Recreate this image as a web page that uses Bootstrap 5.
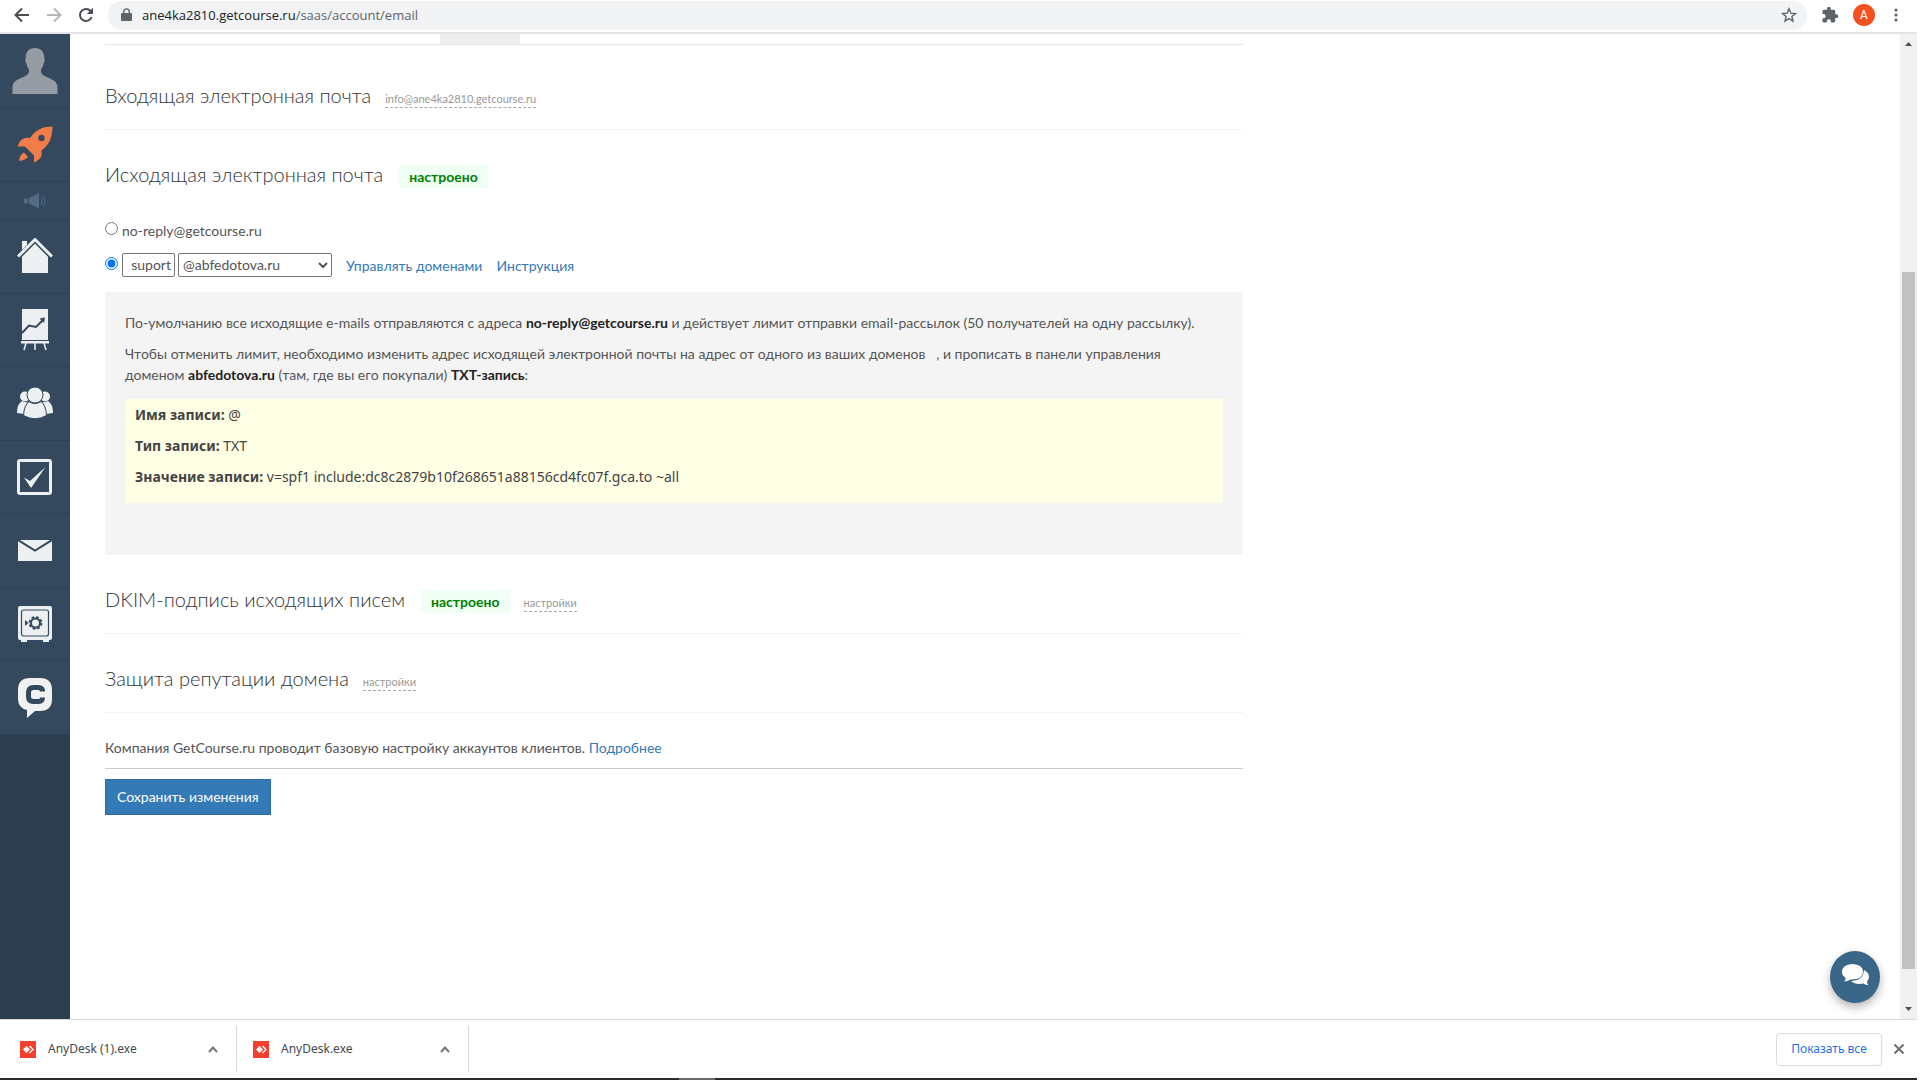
<!DOCTYPE html>
<html lang="ru">
<head>
<meta charset="utf-8">
<meta name="viewport" content="width=device-width, initial-scale=1">
<title>Настройки почты</title>
<link rel="stylesheet" href="https://cdn.jsdelivr.net/npm/bootstrap@5.3.0/dist/css/bootstrap.min.css">
<style>
body{font-family:Lato,Roboto,"Liberation Sans",sans-serif;font-size:14px;line-height:21px;color:#555;height:100vh;overflow:hidden;background:#fff;padding-right:3px}
a{text-decoration:none;color:#337ab7}
svg{display:block;flex:none}
.toolbar{height:34px;border-bottom:2px solid #e4e5e9;padding:0 14px;color:#5f6368}
.tools{height:30px;gap:14px}
.arrows{gap:16px}
.toolbar button{padding:0;border:0;background:none;color:inherit}
.omnibox{background:#f1f3f4;border-radius:14px;height:29px;padding:0 10px 0 12px;gap:9px;font:13px/20px "Open Sans","Noto Sans",sans-serif}
.omnibox b{font-weight:400;color:#202124}
.avatar{width:22px;height:22px;border-radius:50%;background:#f4511e;color:#fff;font:12px/22px Roboto,sans-serif;text-align:center}
.side{width:70px;background:#2c3e50;flex:none}
.side a{display:flex;align-items:center;justify-content:center;background:#34495e;border-bottom:1px solid #2d4054;color:#ecf0f1;height:74px}
.side .horn{height:38px;color:#536b84}
.side .stack{height:515px}
.side .stack a{height:auto;flex:1 1 0}
.page-body{padding-left:35px;min-width:0}
.inner{max-width:1138px}
.tabstrip{height:11px;border-bottom:1px solid #e6e6e6;padding-left:335px;margin-bottom:6px}
.tabstrip span{width:80px;background:#eee}
.sect{height:79px;border-bottom:1px solid #f3f3f3;padding-top:32px}
.sect.open{border-color:transparent}
.sect h2{font-size:20px;line-height:24px;font-weight:300;color:#333;margin:0}
.sect a{font-size:11px;line-height:16px;color:#999;border-bottom:1px dashed #aaa;margin-left:14px}
.ok-tag{font-weight:700;color:#008000;background:#f0fff4;padding:1px 10px;margin-left:16px;line-height:21px}
.mailform{padding-top:11px}
.mailrow{margin-top:12px}
.mailrow a{margin-left:14px}
.mailform input[type=radio]{width:13px;height:13px;margin:0 4px 4px 0}
.pick{height:24px;border:1px solid #767676;border-radius:2px;color:#555;background:#fff;font-size:14px;padding:0 3px 1px;outline:0}
.pick-user{width:53px}
select.pick{width:154px;padding:0 0 1px;margin-left:3px}
.note{background:#f4f4f4;padding:20px 20px 52px;margin-top:15px}
.note p{margin:0 0 10px;max-width:1070px}
.note b{color:#222}
.record{background:#ffffe5;padding:5px 10px 6px;margin-top:14px;font-family:"Noto Sans",sans-serif;color:#444}
.note .record b{color:#444}
.company{padding:24px 0 10px;margin-bottom:10px;border-bottom:1px solid #ccc}
.save{background:#337ab7;border:1px solid #2e6da4;border-radius:0;color:#fff;font-size:14px;line-height:20px;padding:7px 11px}
.chat{position:absolute;right:37px;bottom:16px;width:50px;height:52px;border:0;border-radius:50%;background:#3a6787;box-shadow:0 4px 10px rgba(0,0,0,.3);padding:0 0 4px}
.scroller{width:17px;background:#f1f1f1;padding:8px 2px}
.scroller i{width:13px;height:697px;background:#c1c1c1;display:block;margin:auto 0 38px}
.shelf{height:59px;border-top:1px solid #d8dadd;font:12px/18px "Noto Sans",sans-serif;color:#45484c;padding-right:9px}
.dl{height:46px;border-right:1px solid #d5d5d5;padding:0 18px 0 20px}
.dl.one{width:237px}.dl.two{width:232px;padding-left:16px}
.showall{border:1px solid #dadce0;border-radius:4px;background:#fff;color:#1a73e8;height:33px;width:106px;padding:0}
.taskbar{height:2px;background:#2b2b2d;padding-left:679px}
.taskbar i{display:block;width:36px;height:2px;background:#6b6b6b}
</style>
<script src="https://cdn.jsdelivr.net/npm/bootstrap@5.3.0/dist/js/bootstrap.bundle.min.js"></script>
</head>
<body class="d-flex flex-column">
<header class="toolbar flex-shrink-0">
  <div class="tools d-flex align-items-center">
    <div class="arrows d-flex">
    <button aria-label="Назад"><svg width="16" height="16" viewBox="0 0 16 16" fill="none" stroke="#4a4d51" stroke-width="2"><path d="M15 8H2M8 1.500 1.500 8 8 14.500"/></svg></button>
    <button aria-label="Вперёд"><svg width="16" height="16" viewBox="0 0 16 16" fill="none" stroke="#b4b6b8" stroke-width="2"><path d="M1 8h13M8 1.500 14.500 8 8 14.500"/></svg></button>
    <button aria-label="Обновить"><svg width="16" height="16" viewBox="0 0 16 16"><path d="M13.600 10A6 6 0 1 1 12.500 4" fill="none" stroke="#4a4d51" stroke-width="2"/><path d="M15 .8V7H8.800z" fill="#4a4d51"/></svg></button>
    </div>
    <div class="omnibox d-flex align-items-center flex-fill">
      <svg width="13" height="14" viewBox="0 0 13 14"><path d="M2 5h9q1 0 1 1v6q0 1-1 1H2q-1 0-1-1V6q0-1 1-1z" fill="#5f6368"/><path d="M3.700 6V3.700a2.800 2.800 0 0 1 5.600 0V6" fill="none" stroke="#5f6368" stroke-width="1.400"/></svg>
      <div class="flex-fill"><b>ane4ka2810.getcourse.ru</b>/saas/account/email</div>
      <svg width="16" height="16" viewBox="0 0 16 16"><path d="m8 1.800 1.800 4.300 4.700.4-3.600 3 1.100 4.600L8 11.600l-4 2.500 1.100-4.600-3.600-3 4.700-.4z" fill="none" stroke="#5f6368" stroke-width="1.400"/></svg>
    </div>
    <svg width="18" height="18" viewBox="0 0 24 24" fill="#5f6368"><path d="M20.500 11H19V7a2 2 0 0 0-2-2h-4V3.500a2.500 2.500 0 0 0-5 0V5H4a2 2 0 0 0-2 2v3.800h1.500a2.700 2.700 0 0 1 0 5.400H2V20a2 2 0 0 0 2 2h3.800v-1.500a2.700 2.700 0 0 1 5.400 0V22H17a2 2 0 0 0 2-2v-4h1.500a2.500 2.500 0 0 0 0-5z"/></svg>
    <span class="avatar">A</span>
    <svg width="14" height="16" viewBox="0 0 14 16" fill="#5f6368"><circle cx="7" cy="3" r="1.600"/><circle cx="7" cy="8" r="1.600"/><circle cx="7" cy="13" r="1.600"/></svg>
  </div>
</header>
<main class="d-flex flex-fill position-relative overflow-hidden">
  <nav class="side">
    <a href="#" aria-label="Профиль"><svg width="46" height="46" viewBox="0 0 46 46" fill="#959ca4"><path d="M23 0c6 0 9.500 4 9.200 10 .8 1 .6 4-.6 5.500-.5 3-1.500 4.500-2.600 6-.5 3 .8 5 3.500 6.500 6 3 12 4 13 10.500V46H.5v-7.500C1.500 32 7.500 31 13.500 28c2.700-1.500 4-3.500 3.500-6.500-1.100-1.500-2.100-3-2.600-6-1.200-1.500-1.400-4.500-.6-5.500C13.500 4 17 0 23 0z"/></svg></a>
    <a href="#" aria-label="Старт"><svg width="36" height="38" viewBox="0 0 36 38"><path fill="#f07d4a" fill-rule="evenodd" d="M35.500.5C24 .5 18 5 13 12 6 11 3 14 .5 20.500H8l9 9v7c6-3 8.500-5 7.500-12C31.500 19.500 35.500 12 35.500.5zM24.500 8.800a3.200 3.200 0 1 1 0 6.400 3.200 3.200 0 0 1 0-6.400zM7 26.500l4 4.500c-2 2.500-5 3.500-9 4 .5-4 2-7 5-8.500z"/></svg></a>
    <a href="#" class="horn" aria-label="Новости"><svg width="22" height="16" viewBox="0 0 22 16" fill="currentColor"><path d="M0 5.500h4v5H0zM5 5l10-5v15.500L5 10.500z"/><path d="M17 4.500q2 3.500 0 7M19.500 2.500q3 5.500 0 11" fill="none" stroke="currentColor"/></svg></a>
    <div class="stack d-flex flex-column">
      <a href="#" aria-label="Главная"><svg width="36" height="36" viewBox="0 0 36 36" fill="currentColor"><path d="M5 3h5v4.500L5 12zM18 5l13 13v17H5V18z"/><path d="m1 18.500 17-17 17 17" fill="none" stroke="#34495e" stroke-width="6"/><path d="m1 18.500 17-17 17 17" fill="none" stroke="currentColor" stroke-width="3"/><path d="M5 3h5v4L5 12z"/></svg></a>
      <a href="#" aria-label="Статистика"><svg width="28" height="42" viewBox="0 0 28 42"><path d="M1 0h26v31H1zM0 32h28v2.500H0z" fill="#ecf0f1"/><path d="m5 34-2 7M14 34v7m9-7 2 7" stroke="#ecf0f1" stroke-width="1.500"/><path d="m1 24 7-7.500 7 1.500 7-7" fill="none" stroke="#34495e" stroke-width="2"/><path d="m18.500 9.500 5.500-1-1 5.500z" fill="#34495e"/></svg></a>
      <a href="#" aria-label="Пользователи"><svg width="36" height="32" viewBox="0 0 36 32" fill="currentColor"><circle cx="8" cy="9.500" r="5"/><circle cx="28" cy="9.500" r="5"/><path d="M5 14q4 2 6 1-3 4-4 12l-7-1q0-9 5-12zM31 14q-4 2-6 1 3 4 4 12l7-1q0-9-5-12z"/><path d="M12 14.500q6 4 12 0 5 4 5.500 14Q18 35 6.500 28.500 7 18.500 12 14.500z" stroke="#34495e" /><circle cx="18" cy="8" r="8" stroke="#34495e"/></svg></a>
      <a href="#" aria-label="Задачи"><svg width="36" height="36" viewBox="0 0 36 36"><rect x="1.500" y="1.500" width="32" height="33" rx="1.500" fill="none" stroke="#ecf0f1" stroke-width="3"/><path d="m7 18.500 6 3.500L28.500 8 14 29z" fill="#ecf0f1"/></svg></a>
      <a href="#" aria-label="Сообщения"><svg width="34" height="21" viewBox="0 0 34 21"><path fill="#ecf0f1" d="M0 0h34v21H0z"/><path d="m0 0 17 10.500L34 0" fill="none" stroke="#34495e" stroke-width="2"/></svg></a>
      <a href="#" aria-label="Продажи"><svg width="34" height="36" viewBox="0 0 34 36"><path fill="#ecf0f1" d="M2 0h30q2 0 2 2v30q0 2-2 2h-1v2h-6v-2H9v2H3v-2H2q-2 0-2-2V2q0-2 2-2z"/><rect x="3.500" y="4" width="27" height="26" rx="2" fill="none" stroke="#34495e" stroke-width="1.200"/><circle cx="17.500" cy="17" r="4.500" fill="none" stroke="#34495e" stroke-width="2"/><circle cx="17.500" cy="17" r="6" fill="none" stroke="#34495e" stroke-width="1.800" stroke-dasharray="2.700 2"/><path d="m7 14 3.500 3L7 20z" fill="#34495e"/></svg></a>
      <a href="#" aria-label="Чат"><svg width="34" height="40" viewBox="0 0 34 40"><path fill="#f1f1f1" d="M12 0h10q12 0 12 12v9q0 12-12 12h-5l-8 7v-8Q0 30 0 21v-9Q0 0 12 0z"/><path d="M24.500 13.500q0-4-4-4h-5q-5 0-5 5v4q0 5 5 5h5q4 0 4-4" fill="none" stroke="#34495e" stroke-width="5"/></svg></a>
    </div>
  </nav>
  <div class="page-body flex-fill">
   <form class="inner" onsubmit="return false">
    <div class="tabstrip d-flex"><span></span></div>
    <section class="sect"><div class="d-flex align-items-baseline"><h2>Входящая электронная почта</h2><a href="#">info@ane4ka2810.getcourse.ru</a></div></section>
    <section class="sect open"><div class="d-flex align-items-baseline"><h2>Исходящая электронная почта</h2><span class="ok-tag">настроено</span></div></section>
    <div class="mailform">
      <div class="d-flex align-items-center"><input type="radio" name="from" id="noreply"><label for="noreply">no-reply@getcourse.ru</label></div>
      <div class="mailrow d-flex align-items-center"><input type="radio" name="from" id="own" checked aria-label="Свой адрес"><input class="pick pick-user text-end" value="suport" aria-label="Имя ящика"><select class="pick" aria-label="Домен"><option>@abfedotova.ru</option></select><a href="#">Управлять доменами</a><a href="#">Инструкция</a></div>
    </div>
    <div class="note">
      <p>По-умолчанию все исходящие e-mails отправляются с адреса <b>no-reply@getcourse.ru</b> и действует лимит отправки email-рассылок (50 получателей на одну рассылку).</p>
      <p>Чтобы отменить лимит, необходимо изменить адрес исходящей электронной почты на адрес от одного из ваших доменов &nbsp; , и прописать в панели управления<br>доменом <b>abfedotova.ru</b> (там, где вы его покупали) <b>TXT-запись</b>:</p>
      <div class="record"><p><b>Имя записи:</b> @</p><p><b>Тип записи:</b> TXT</p><p><b>Значение записи:</b> v=spf1 include:dc8c2879b10f268651a88156cd4fc07f.gca.to ~all</p></div>
    </div>
    <section class="sect"><div class="d-flex align-items-baseline"><h2>DKIM-подпись исходящих писем</h2><span class="ok-tag">настроено</span><a href="#">настройки</a></div></section>
    <section class="sect"><div class="d-flex align-items-baseline"><h2>Защита репутации домена</h2><a href="#">настройки</a></div></section>
    <div class="company">Компания GetCourse.ru проводит базовую настройку аккаунтов клиентов. <a href="#">Подробнее</a></div>
    <button class="btn save">Сохранить изменения</button>
   </form>
  </div>
  <div class="scroller d-flex flex-column align-items-center flex-shrink-0">
    <svg width="7" height="4" viewBox="0 0 7 4"><path d="M0 4 3.500 0 7 4z" fill="#505050"/></svg>
    <i></i>
    <svg width="7" height="4" viewBox="0 0 7 4"><path d="M0 0h7L3.500 4z" fill="#505050"/></svg>
  </div>
  <button class="chat" aria-label="Открыть чат"><svg class="mx-auto" width="27" height="22" viewBox="0 0 27 22" fill="#fff"><path d="M22 6q5 2.500 5 7 0 2.500-2 4.500 0 2 1.500 3.500-3 0-5-1.500-8 1.500-12.500-2.500Q21 17 22 6z"/><path d="M10.500 0Q21 .5 21 8q-.5 8-12.500 7.500Q5.500 17.500 2 17.500 4 16 3.500 13.500 0 11.500 0 8 0 .5 10.500 0z"/></svg></button>
</main>
<footer class="shelf d-flex align-items-center flex-shrink-0">
  <div class="dl one d-flex align-items-center"><svg width="16" height="17" viewBox="0 0 16 17"><path fill="#f5402f" d="M0 0h16v17H0z"/><path d="m3 8.500 3.500-3.500L10 8.500 6.500 12z" fill="#fff"/><path d="m9.500 5 3.500 3.500L9.500 12" fill="none" stroke="#fff" stroke-width="1.200"/></svg><span class="ms-2 ps-1 flex-fill">AnyDesk (1).exe</span><svg width="10" height="7" viewBox="0 0 10 7" fill="none" stroke="#777" stroke-width="2"><path d="m1 6 4-4.500L9 6"/></svg></div>
  <div class="dl two d-flex align-items-center"><svg width="16" height="17" viewBox="0 0 16 17"><path fill="#f5402f" d="M0 0h16v17H0z"/><path d="m3 8.500 3.500-3.500L10 8.500 6.500 12z" fill="#fff"/><path d="m9.500 5 3.500 3.500L9.500 12" fill="none" stroke="#fff" stroke-width="1.200"/></svg><span class="ms-2 ps-1 flex-fill">AnyDesk.exe</span><svg width="10" height="7" viewBox="0 0 10 7" fill="none" stroke="#777" stroke-width="2"><path d="m1 6 4-4.500L9 6"/></svg></div>
  <button class="showall ms-auto me-2">Показать все</button>
  <button class="border-0 bg-transparent p-1" aria-label="Закрыть"><svg width="10" height="10" viewBox="0 0 10 10" stroke="#6b6e72" stroke-width="2"><path d="m.5.5 9 9m0-9-9 9"/></svg></button>
</footer>
<div class="taskbar flex-shrink-0"><i></i></div>
</body>
</html>
